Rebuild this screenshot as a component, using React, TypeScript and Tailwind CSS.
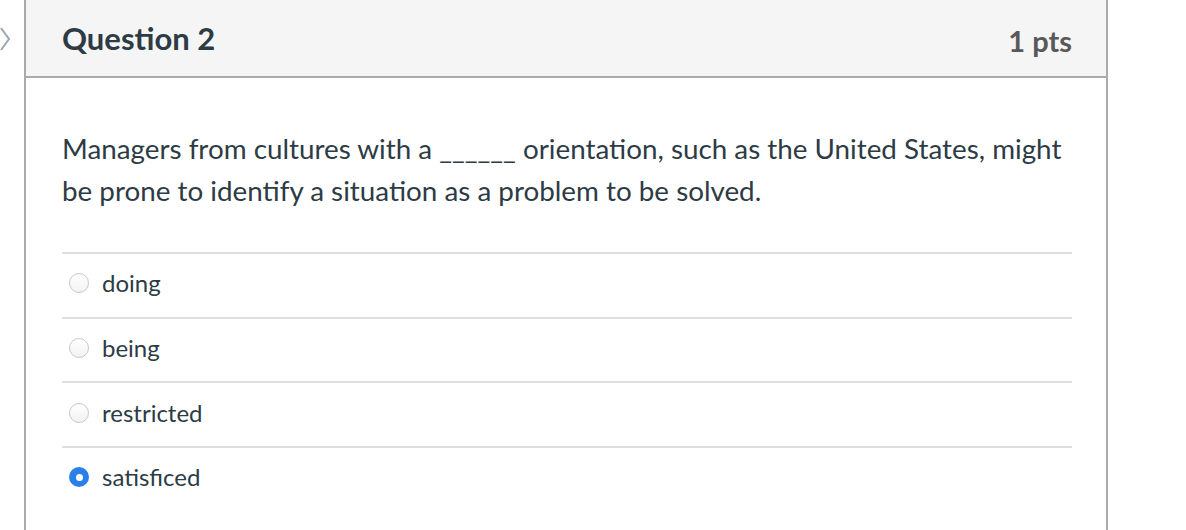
import { useState } from "react"

const options = ["doing", "being", "restricted", "satisficed"]

function Radio({ checked }: { checked: boolean }) {
  if (checked) {
    return (
      <span className="flex h-[20px] w-[20px] shrink-0 items-center justify-center rounded-full bg-[#2b7fe8]">
        <span className="h-[7px] w-[7px] rounded-full bg-white" />
      </span>
    )
  }
  return (
    <span className="h-[20px] w-[20px] shrink-0 rounded-full border border-[#c8c8c8] bg-gradient-to-b from-[#ffffff] to-[#f2f2f2]" />
  )
}

export default function App() {
  const [picked, setPicked] = useState("satisficed")

  return (
    <div className="flex h-[530px] w-[1186px] bg-white font-['Lato','Liberation_Sans',sans-serif] text-[#2d3b45]">
      <div className="w-[24px] shrink-0 pt-[27px]">
        <svg width="12" height="24" viewBox="0 0 12 24" fill="none">
          <path d="M1 1 L9 12 L1 23" stroke="#9aa6b2" strokeWidth="2" />
        </svg>
      </div>
      <div className="w-[1084px] shrink-0 border-x-2 border-[#aaaaaa]">
        <div className="flex h-[78px] items-center justify-between border-b-2 border-[#aaaaaa] bg-[#f5f5f5] pl-[36px] pr-[34px]">
          <h2 className="text-[31px] font-bold leading-none">Question 2</h2>
          <span className="mt-[4px] text-[29px] font-bold leading-none text-[#595959]">1 pts</span>
        </div>
        <div className="pl-[36px] pr-[34px] pt-[50px]">
          <p className="text-[27.8px] leading-[42px]">
            Managers from cultures with a ______ orientation, such as the United States, might be
            prone to identify a situation as a problem to be solved.
          </p>
          <div className="mt-[40px]">
            {options.map((o) => (
              <label
                key={o}
                className="flex h-[64.7px] cursor-pointer items-center gap-[13px] border-t-2 border-[#dedede] pb-[4px] pl-[7px]"
                onClick={() => setPicked(o)}
              >
                <Radio checked={picked === o} />
                <span className="text-[24px]">{o}</span>
              </label>
            ))}
          </div>
        </div>
      </div>
    </div>
  )
}
